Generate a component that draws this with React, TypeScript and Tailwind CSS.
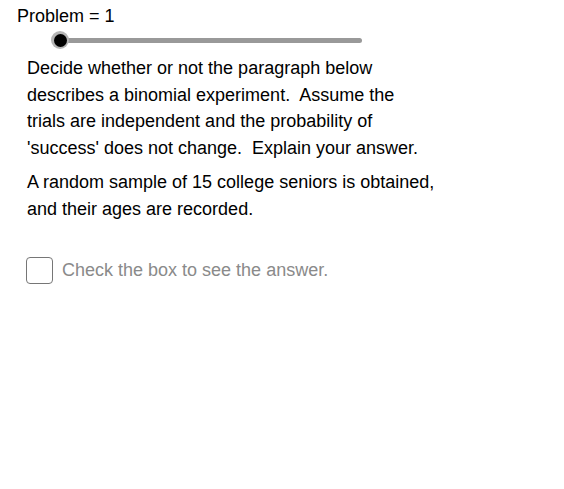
export default function App() {
  return (
    <div className="w-[564px] h-[489px] bg-white text-black font-['Liberation_Sans',Arial,sans-serif]">
      <div className="pl-[17px] pt-[6px] text-[18px] leading-[20px]">Problem = 1</div>
      {/* slider */}
      <div className="flex items-center pl-[51px] mt-[5px] h-[18px]">
        <div className="relative w-[311px] h-[18px] flex items-center">
          <div className="ml-[9px] flex-1 h-[5px] rounded-full bg-[#999999]" />
          <div className="absolute left-0 top-0 w-[18px] h-[18px] rounded-full bg-[#b5b5b5] flex items-center justify-center">
            <div className="w-[13px] h-[13px] rounded-full bg-black" />
          </div>
        </div>
      </div>
      <div className="pl-[27px] pr-[100px] mt-[6px] text-[18px] leading-[26.7px]">
        <p>
          Decide whether or not the paragraph below
          <br />
          describes a binomial experiment.&nbsp; Assume the
          <br />
          trials are independent and the probability of
          <br />
          'success' does not change.&nbsp; Explain your answer.
        </p>
        <p className="mt-[7px]">
          A random sample of 15 college seniors is obtained,
          <br />
          and their ages are recorded.
        </p>
      </div>
      <label className="flex items-center gap-[9px] pl-[26px] mt-[35px]">
        <span className="w-[27px] h-[27px] rounded-[4px] border border-[#767676] bg-white" />
        <span className="text-[18px] text-[#8a8a8a]">Check the box to see the answer.</span>
      </label>
    </div>
  );
}
